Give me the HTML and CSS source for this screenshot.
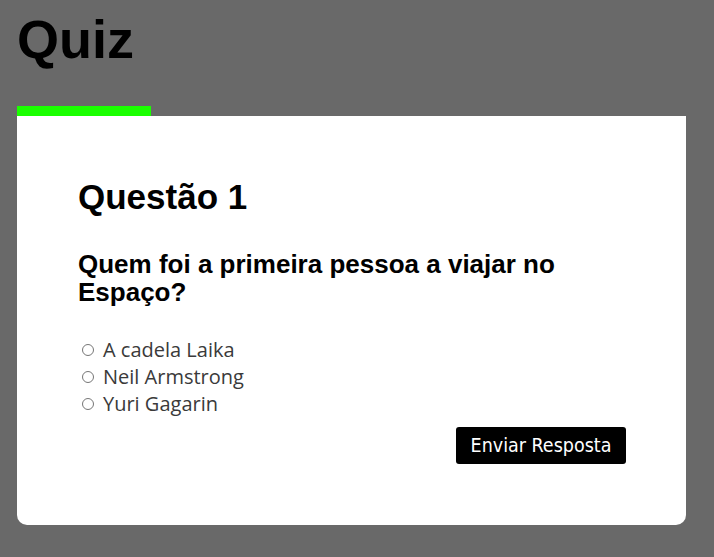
FILE: index.html
```html
<!DOCTYPE html>
<html lang="pt">
<head>
<meta charset="utf-8">
<title>Quiz</title>
<link rel="stylesheet" href="styles.css">
</head>
<body>
<main class="page">
  <h1 class="title">Quiz</h1>
  <div class="progress"><div class="progress-fill" style="width: 20%"></div></div>
  <section class="card">
    <h2 class="q-num">Questão 1</h2>
    <h3 class="q-text">Quem foi a primeira pessoa a viajar no Espaço?</h3>
    <ul class="options">
      <li class="option"><span class="radio"></span><span>A cadela Laika</span></li>
      <li class="option"><span class="radio"></span><span>Neil Armstrong</span></li>
      <li class="option"><span class="radio"></span><span>Yuri Gagarin</span></li>
    </ul>
    <div class="actions"><button class="submit">Enviar Resposta</button></div>
  </section>
</main>
</body>
</html>
```

FILE: styles.css
```css
html, body {
  margin: 0;
  padding: 0;
  background: #696969;
  font-family: "Liberation Sans", Arial, sans-serif;
}
.page {
  width: 669px;
  margin-left: 17px;
  display: flex;
  flex-direction: column;
}
.title {
  margin: 0;
  padding-top: 8px;
  font-size: 54px;
  font-weight: bold;
  line-height: 62px;
  color: #000;
  height: 106px;
  box-sizing: border-box;
}
.progress {
  height: 10px;
}
.progress-fill {
  height: 10px;
  background: #1aff00;
}
.card {
  background: #fff;
  border-radius: 0 0 10px 10px;
  padding: 61px 60px 60px 61px;
  height: 409px;
  box-sizing: border-box;
}
.q-num {
  margin: 0;
  font-size: 35px;
  line-height: 40px;
  font-weight: bold;
}
.q-text {
  margin: 33px 0 0;
  font-size: 26px;
  line-height: 28px;
  font-weight: bold;
}
.options {
  list-style: none;
  margin: 30px 0 0;
  padding: 0 0 0 4px;
  font-family: "Open Sans", sans-serif;
  font-size: 20px;
  line-height: 27px;
  color: #3a3a3a;
}
.option {
  display: flex;
  align-items: center;
  gap: 9px;
}
.radio {
  width: 12px;
  height: 12px;
  border: 1px solid #767676;
  border-radius: 50%;
  box-sizing: border-box;
}
.actions {
  display: flex;
  justify-content: flex-end;
  margin-top: 10px;
}
.submit {
  background: #000;
  color: #fff;
  border: none;
  border-radius: 3px;
  font-family: "DejaVu Sans Condensed", "DejaVu Sans", sans-serif;
  font-size: 19.5px;
  width: 170px;
  height: 37px;
  padding: 0;
}
```
